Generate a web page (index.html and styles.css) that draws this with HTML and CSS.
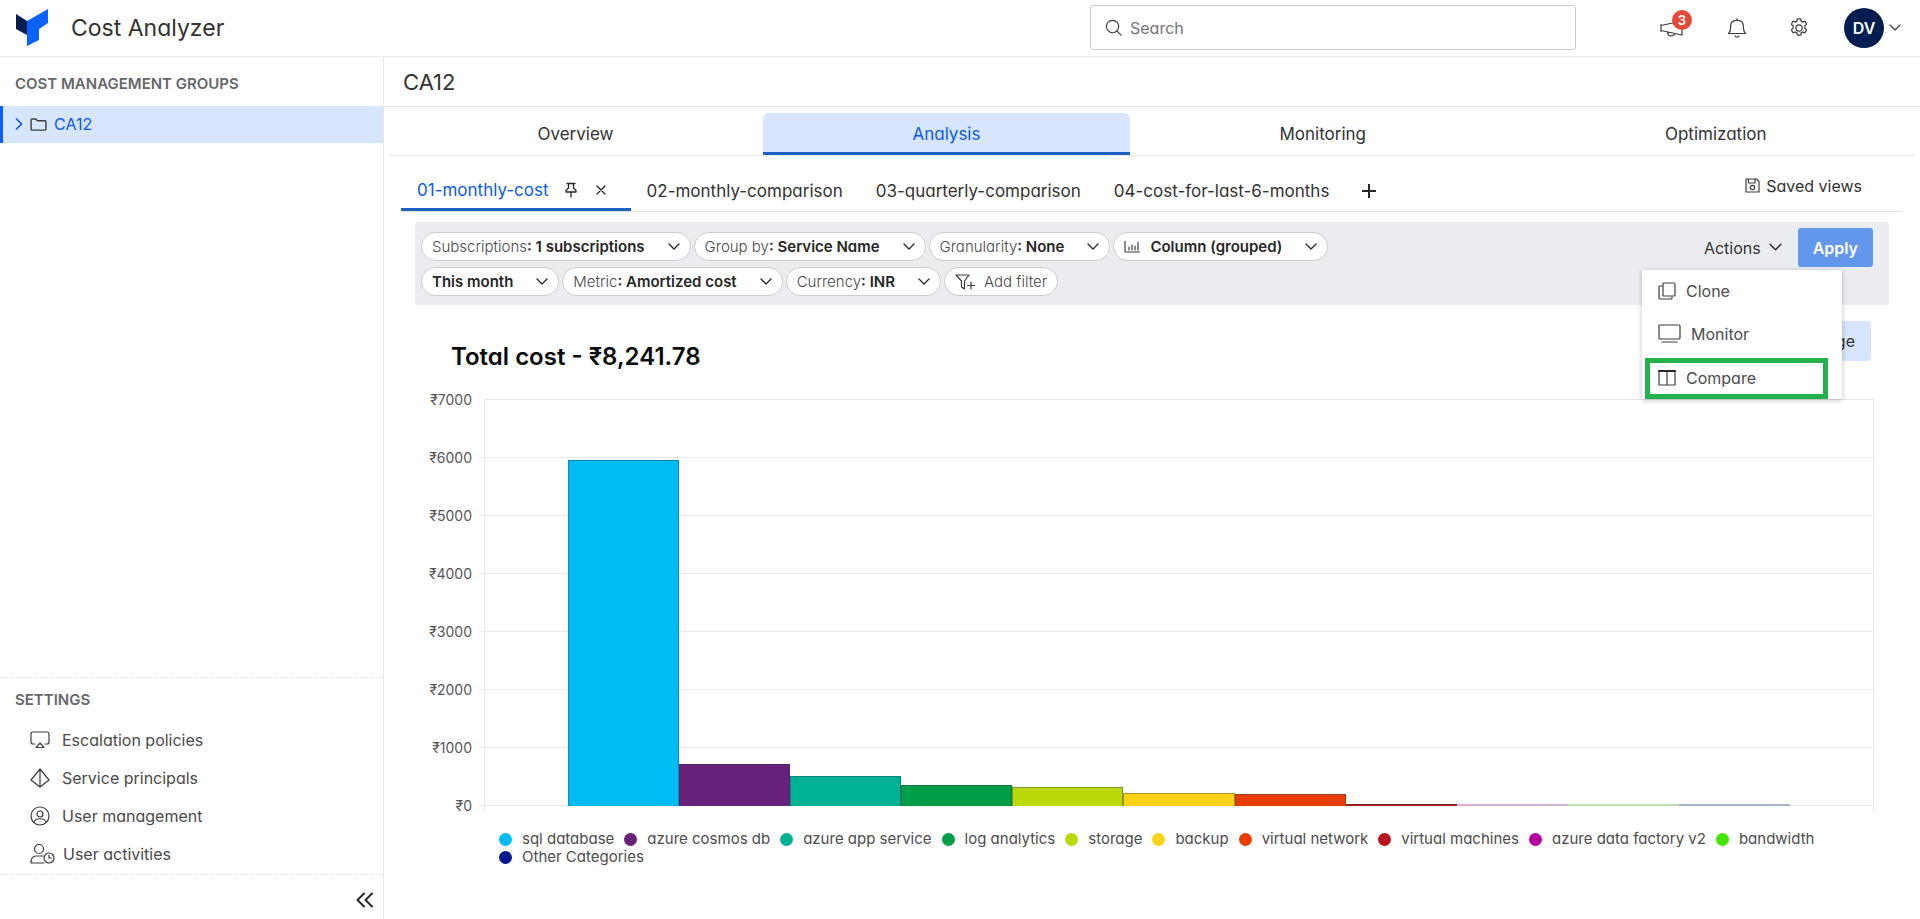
FILE: index.html
```html
<!DOCTYPE html>
<html lang="en">
<head>
<meta charset="utf-8">
<title>Cost Analyzer</title>
<link rel="stylesheet" href="styles.css">
</head>
<body>
<header class="topbar">
  <svg class="logo" viewBox="0 0 32 37" width="32" height="37"><path d="M0 5l11 7v14L0 20z" fill="#001d4f"/><path d="M11 12L32 0v14l-9 6v11l-12 6z" fill="#0a62fb"/></svg>
  <span class="brand">Cost Analyzer</span>
  <label class="search">
    <svg viewBox="0 0 18 18" width="17" height="17" class="ico"><circle cx="8" cy="8" r="6.5"/><path d="M12.500 12.500L17 17"/></svg>
    <input type="text" placeholder="Search" aria-label="Search">
  </label>
  <div class="tools">
    <button class="tool announce" aria-label="Announcements">
      <svg viewBox="0 0 26 22" width="26" height="22" class="ico"><path d="M23 4v14M23 4L2 8.500M2 7.500v7M2 13.500L23 18M8.500 15c0 5 6.500 5 7 1.500"/></svg>
      <span class="badge">3</span>
    </button>
    <button class="tool" aria-label="Notifications">
      <svg viewBox="0 0 20 20" width="20" height="20" class="ico"><path d="M10 .7v1.600M1.500 15.500h17c-1.500-1.500-2.200-3-2.200-8C16.300 4 13.500 2.300 10 2.300S3.700 4 3.700 7.500c0 5-.7 6.500-2.200 8zM8 18c.8 1.500 3.200 1.500 4 0"/></svg>
    </button>
    <button class="tool" aria-label="Settings">
      <svg viewBox="0 0 20 20" width="20" height="20" class="ico"><circle cx="10" cy="10" r="3.200"/><path d="M8 1.500q0-.7.700-.7h2.600q.7 0 .7.700v1.600q.9.400 1.700 1l1.500-.8q.6-.3 1 .3l1.200 2.200q.3.600-.2 1l-1.400.9q.2 1.300 0 2.600l1.400.9q.5.400.2 1l-1.200 2.200q-.4.600-1 .3l-1.500-.8q-.8.600-1.700 1v1.600q0 .7-.7.700H8.700q-.7 0-.7-.7v-1.600q-.9-.4-1.700-1l-1.500.8q-.6.300-1-.3l-1.200-2.200q-.3-.6.2-1l1.400-.9q-.2-1.300 0-2.600l-1.400-.9q-.5-.4-.2-1l1.200-2.200q.4-.6 1-.3l1.500.8q.8-.6 1.700-1z"/></svg>
    </button>
    <button class="account" aria-label="Account">
      <span class="avatar">DV</span>
      <svg viewBox="0 0 12 12" width="12" height="12" class="ico"><path d="M1 3l5 5 5-5"/></svg>
    </button>
  </div>
</header>

<div class="shell">
  <aside class="sidebar">
    <h2 class="side-title">COST MANAGEMENT GROUPS</h2>
    <a class="group" href="#">
      <svg viewBox="0 0 8 12" width="8" height="12" class="ico accent"><path d="M1.500 1l5 5-5 5"/></svg>
      <svg viewBox="0 0 18 14" width="17" height="13" class="ico folder"><path d="M1 12V2q0-1 1-1h4l2 2h8q1 0 1 1v8q0 1-1 1H2q-1 0-1-1z"/></svg>
      <span>CA12</span>
    </a>
    <nav class="settings">
      <h2 class="settings-title">SETTINGS</h2>
      <a href="#"><svg viewBox="0 0 20 20" width="20" height="20" class="ico"><path d="M5 14H3q-2 0-2-2V4q0-2 2-2h14q2 0 2 2v8q0 2-2 2h-2M10 13l4 4.500H6z"/></svg>Escalation policies</a>
      <a href="#"><svg viewBox="0 0 20 20" width="20" height="20" class="ico"><path d="M10 1l9 11-9 7-9-7zM10 1v18"/></svg>Service principals</a>
      <a href="#"><svg viewBox="0 0 20 20" width="20" height="20" class="ico"><circle cx="10" cy="10" r="9"/><circle cx="10" cy="8" r="3"/><path d="M4 16.500c1-5 11-5 12 0"/></svg>User management</a>
      <a href="#" class="wide"><svg viewBox="0 0 25 20" width="25" height="20" class="ico"><circle cx="9" cy="5" r="4.500"/><path d="M14 19H1c0-5 2-7 5-7h7"/><circle cx="19" cy="14" r="5"/><path d="M19 11v3h2.500"/></svg>User activities</a>
    </nav>
    <div class="collapse"><button aria-label="Collapse sidebar"><svg viewBox="0 0 18 16" width="18" height="16" class="ico bold"><path d="M8.500 1l-7 7 7 7M16.500 1l-7 7 7 7"/></svg></button></div>
  </aside>

  <main class="main">
    <h1 class="page-title">CA12</h1>
    <nav class="tabs">
      <a href="#">Overview</a>
      <a href="#" class="active">Analysis</a>
      <a href="#">Monitoring</a>
      <a href="#">Optimization</a>
    </nav>

    <div class="views">
      <div class="view active">
        <a href="#">01-monthly-cost</a>
        <button aria-label="Pin"><svg viewBox="0 0 12 16" width="12" height="16" class="ico dark"><path d="M2 1.500h8M3.500 1.500v4.500L1 8.500V10h10V8.500L8.500 6V1.500M6 10v5"/></svg></button>
        <button aria-label="Close"><svg viewBox="0 0 10 10" width="10" height="10" class="ico dark"><path d="M1 1l8 8M9 1L1 9"/></svg></button>
      </div>
      <a class="view" href="#">02-monthly-comparison</a>
      <a class="view" href="#">03-quarterly-comparison</a>
      <a class="view" href="#">04-cost-for-last-6-months</a>
      <button class="add" aria-label="Add view"><svg viewBox="0 0 14 14" width="14" height="14" class="ico bold"><path d="M7 0v14M0 7h14"/></svg></button>
      <a class="saved" href="#"><svg viewBox="0 0 15 15" width="15" height="15" class="ico"><path d="M1 1h10.500L14 3.500V14H1zM3.500 1v4h6.500V1"/><circle cx="7.500" cy="9.500" r="2.200"/></svg>Saved views</a>
    </div>

    <section class="filters">
      <div class="pills">
        <div class="pill-row">
          <button class="pill"><span>Subscriptions<b>: 1 subscriptions</b></span><svg viewBox="0 0 12 12" width="12" height="12" class="ico dark"><path d="M1 3l5 5 5-5"/></svg></button>
          <button class="pill"><span>Group by<b>: Service Name</b></span><svg viewBox="0 0 12 12" width="12" height="12" class="ico dark"><path d="M1 3l5 5 5-5"/></svg></button>
          <button class="pill"><span>Granularity<b>: None</b></span><svg viewBox="0 0 12 12" width="12" height="12" class="ico dark"><path d="M1 3l5 5 5-5"/></svg></button>
          <button class="pill"><span class="with-icon"><svg viewBox="0 0 16 12" width="16" height="12" class="ico"><path d="M1 0v11h15M5 9V6M8 9V4M11 9V5M14 9V1"/></svg><b>Column (grouped)</b></span><svg viewBox="0 0 12 12" width="12" height="12" class="ico dark"><path d="M1 3l5 5 5-5"/></svg></button>
        </div>
        <div class="pill-row">
          <button class="pill"><b>This month</b><svg viewBox="0 0 12 12" width="12" height="12" class="ico dark"><path d="M1 3l5 5 5-5"/></svg></button>
          <button class="pill"><span>Metric<b>: Amortized cost</b></span><svg viewBox="0 0 12 12" width="12" height="12" class="ico dark"><path d="M1 3l5 5 5-5"/></svg></button>
          <button class="pill"><span>Currency<b>: INR</b></span><svg viewBox="0 0 12 12" width="12" height="12" class="ico dark"><path d="M1 3l5 5 5-5"/></svg></button>
          <button class="pill add-filter"><svg viewBox="0 0 20 16" width="20" height="16" class="ico"><path d="M1 1h13L9.500 7v8L6.500 13V7zM16 8v7M12.500 11.500h7"/></svg>Add filter</button>
        </div>
      </div>
      <div class="actions">
        <button class="actions-btn" aria-expanded="true">Actions<svg viewBox="0 0 12 12" width="13" height="13" class="ico dark"><path d="M1 3l5 5 5-5"/></svg></button>
        <button class="apply">Apply</button>
        <div class="menu">
          <button><svg viewBox="0 0 18 18" width="18" height="18" class="ico"><rect x="5" y="1" width="12" height="13" rx="1"/><path d="M4 4H2q-1 0-1 1v11q0 1 1 1h11q1 0 1-1v-1"/></svg>Clone</button>
          <button><svg viewBox="0 0 23 19" width="23" height="19" class="ico"><rect x="1" y="1" width="21" height="14" rx="1"/><path d="M4 18h15"/></svg>Monitor</button>
          <button class="marked"><svg viewBox="0 0 18 18" width="18" height="18" class="ico"><path d="M1 2v14h16V2M9 2v14"/><path class="thick" d="M1 2h16"/></svg>Compare</button>
        </div>
      </div>
    </section>

    <section class="report">
      <div class="report-head">
        <h2>Total cost - ₹8,241.78</h2>
        <button class="usage">ge</button>
      </div>
      <div class="chart">
        <div class="axis"><span>₹7000</span><span>₹6000</span><span>₹5000</span><span>₹4000</span><span>₹3000</span><span>₹2000</span><span>₹1000</span><span>₹0</span></div>
        <div class="grid"><i></i><i></i><i></i><i></i><i></i><i></i><i></i></div>
        <div class="bars">
          <div class="bar c1" style="height:85%"></div>
          <div class="bar c2" style="height:10.400%"></div>
          <div class="bar c3" style="height:7.300%"></div>
          <div class="bar c4" style="height:5.200%"></div>
          <div class="bar c5" style="height:4.600%"></div>
          <div class="bar c6" style="height:3.300%"></div>
          <div class="bar c7" style="height:3%"></div>
          <div class="bar c8" style="height:0.600%"></div>
          <div class="bar thin t9"></div>
          <div class="bar thin t10"></div>
          <div class="bar thin t11"></div>
        </div>
      </div>
      <ul class="legend">
        <li><i class="c1"></i>sql database</li>
        <li><i class="c2"></i>azure cosmos db</li>
        <li><i class="c3"></i>azure app service</li>
        <li><i class="c4"></i>log analytics</li>
        <li><i class="c5"></i>storage</li>
        <li><i class="c6"></i>backup</li>
        <li><i class="c7"></i>virtual network</li>
        <li><i class="c8"></i>virtual machines</li>
        <li><i class="c9"></i>azure data factory v2</li>
        <li><i class="c10"></i>bandwidth</li>
        <li><i class="c11"></i>Other Categories</li>
      </ul>
    </section>
  </main>
</div>
</body>
</html>
```
FILE: styles.css
```css
* { box-sizing: border-box; }
body {
  margin: 0;
  min-height: 100vh;
  display: flex;
  flex-direction: column;
  font-family: Inter, "Noto Sans", sans-serif;
  font-feature-settings: "cv11";
  font-size: 16px;
  color: #323232;
  background: #fff;
}
button {
  font: inherit;
  font-feature-settings: inherit;
  color: inherit;
  background: none;
  border: 0;
  padding: 0;
  display: flex;
  align-items: center;
}
a { color: inherit; text-decoration: none; }
h1, h2 { margin: 0; font-weight: 400; }
svg { flex: none; display: block; }
.ico { fill: none; stroke: #3c3c3c; stroke-width: 1.2; stroke-linejoin: round; stroke-linecap: round; }
.ico.accent { stroke: #0a55e0; stroke-width: 1.6; }
.ico.dark { stroke: #262626; stroke-width: 1.3; }
.ico.bold { stroke: #262626; stroke-width: 2; stroke-linecap: butt; }
.ico .thick { stroke-width: 2; stroke: #262626; }

.topbar {
  display: flex;
  align-items: center;
  height: 57px;
  padding: 0 19px 1px 16px;
  border-bottom: 1px solid #e8e8e8;
}
.brand { margin-left: 23px; font-size: 23px; }
.search {
  display: flex;
  align-items: center;
  gap: 8px;
  width: 486px;
  height: 45px;
  margin-left: auto;
  padding: 0 14px;
  border: 1px solid #c9c9d6;
  border-radius: 3px;
}
.search input {
  flex: 1;
  min-width: 0;
  padding: 0;
  border: 0;
  outline: 0;
  font: inherit;
  font-feature-settings: inherit;
}
.search input::placeholder { color: #74757a; opacity: 1; }
.tools { display: flex; align-items: center; margin-left: 83px; gap: 42px; }
.tool { position: relative; }
.badge {
  position: absolute;
  left: 13px;
  top: -7px;
  width: 20px;
  height: 20px;
  border-radius: 50%;
  background: #e34a3b;
  color: #fff;
  font-size: 13px;
  line-height: 20px;
  font-weight: 600;
}
.account { gap: 5px; margin-left: -7px; }
.avatar {
  width: 40px;
  height: 40px;
  border-radius: 50%;
  background: #001d4f;
  color: #fff;
  font-weight: 600;
  line-height: 40px;
}

.shell { flex: 1; display: flex; }
.sidebar {
  width: 384px;
  flex: none;
  display: flex;
  flex-direction: column;
  border-right: 1px solid #e8e8e8;
}
.side-title, .settings-title { font-size: 15px; font-weight: 600; color: #66676b; }
.side-title { padding: 4px 15px 0; line-height: 45px; }
.group {
  display: flex;
  align-items: center;
  height: 37px;
  padding: 0 0 1px 12px;
  gap: 7px;
  border-left: 3px solid #0a62fb;
  background: #d8e5ff;
  color: #0a5ae6;
}
.group .folder { stroke-width: 1.5; }
.settings {
  margin-top: auto;
  padding: 10px 15px 0;
  border-top: 1px dashed #e4e4e4;
  height: 197px;
}
.settings-title { line-height: 24px; padding-bottom: 9px; }
.settings a { display: flex; align-items: center; gap: 12px; height: 38px; padding-left: 15px; color: #4a4a4a; }
.settings .wide { gap: 8px; }
.collapse { display: flex; justify-content: flex-end; height: 45px; padding: 5px 9px 0 0; border-top: 1px dashed #e4e4e4; }

.main { flex: 1; min-width: 0; display: flex; flex-direction: column; }
.page-title { height: 50px; line-height: 50px; padding-left: 19px; font-size: 22px; border-bottom: 1px solid #e8e8e8; }
.tabs { display: flex; margin: 0 4px; padding-top: 6px; border-bottom: 1px solid #e8e8e8; font-size: 17px; }
.tabs a { flex: 1 1 auto; height: 42px; line-height: 42px; text-align: center; }
.tabs .active {
  background: #d8e5ff;
  color: #0a5ae6;
  border-bottom: 3px solid #1c60c0;
  border-radius: 6px 6px 0 0;
}
.views {
  display: flex;
  align-items: center;
  height: 56px;
  margin: 0 18px 0 17px;
  border-bottom: 1px solid #dedede;
  font-size: 17px;
}
.view { height: 100%; display: flex; align-items: center; padding: 15px 17px 0 16px; }
.view.active { color: #0a5ae6; border-bottom: 3px solid #1c60c0; padding-right: 25px; }
.view.active button { margin-left: 16px; }
.view.active button + button { margin-left: 19px; }
.add { margin: 14px 0 0 16px; }
.saved { display: flex; align-items: center; gap: 6px; margin-left: auto; padding: 4px 40px 0 0; font-size: 16px; }

.filters {
  display: flex;
  justify-content: space-between;
  margin: 10px 31px 0;
  padding: 6px 16px 9px 6px;
  background: #ebecf0;
  border-radius: 3px;
  font-size: 16px;
}
.pills { padding-top: 4px; }
.pill-row { display: flex; gap: 3px; margin-bottom: 6px; }
.pill-row + .pill-row { margin-bottom: 0; }
.pill {
  height: 29px;
  padding: 0 10px;
  gap: 23px;
  border: 1px solid #c9cacc;
  border-radius: 15px;
  background: #fff;
  font-size: 15px;
  font-weight: 300;
  color: #48494c;
}
.pill b { font-weight: 600; color: #262626; }
.with-icon { display: flex; align-items: center; gap: 10px; }
.add-filter { gap: 9px; }
.actions { position: relative; display: flex; align-items: flex-start; gap: 16px; }
.actions-btn { height: 39px; gap: 8px; }
.apply { height: 39px; padding: 0 15px; border-radius: 3px; background: #6297ec; color: #fff; font-weight: 600; }
.menu {
  position: absolute;
  z-index: 2;
  top: 42px;
  right: 31px;
  width: 200px;
  background: #fff;
  box-shadow: 0 1px 5px rgba(0, 0, 0, .25);
}
.menu button { width: 100%; height: 43px; gap: 10px; padding: 0 0 2px 16px; color: #4c4c4c; }
.menu .marked { width: 183px; height: 41px; margin: 2px 0 0 3px; padding: 0 0 2px 8px; border: 5px solid #22b14c; }

.report { padding: 16px 46px 0 31px; }
.report-head { display: flex; justify-content: space-between; height: 78px; padding: 0 3px 0 36px; }
.report-head h2 { font-size: 24px; font-weight: 600; color: #0c0c0c; line-height: 72px; }
.usage { height: 40px; width: 110px; justify-content: flex-end; padding-right: 16px; border-radius: 3px; background: #d8e5ff; }
.chart { display: grid; grid-template: 412px / 65px 1fr; font-size: 14px; color: #55565a; }
.axis { grid-area: 1 / 1; margin-top: -8px; padding-right: 8px; text-align: right; }
.axis span { display: block; height: 58px; line-height: 18px; }
.axis span:last-child { height: 18px; }
.grid { grid-area: 1 / 2; display: flex; flex-direction: column; border: 1px solid #e6e6e6; border-bottom: 0; margin-left: 4px; }
.grid i { height: 58px; margin-left: -5px; border-bottom: 1px solid #e9e9e9; }
.bars { grid-area: 1 / 2; display: flex; align-items: flex-end; height: 407px; margin-left: 4px; padding: 0 6%; }
.bar { flex: 1; border: 1px solid rgba(40, 60, 80, .4); border-bottom: 0; }
.c1 { background: #00bcf2; } .c2 { background: #68217a; } .c3 { background: #00b294; }
.c4 { background: #009e49; } .c5 { background: #bad80a; } .c6 { background: #fcd116; }
.c7 { background: #e83c00; } .c8 { background: #ba141a; } .c9 { background: #b4009e; }
.c10 { background: #43e600; } .c11 { background: #00188f; }
.thin { height: 2px; border-color: transparent; border-top: 0; }
.t9 { background: #d8b0d0; } .t10 { background: #c0e0b0; } .t11 { background: #a8b0d0; }
.legend {
  display: flex;
  flex-wrap: wrap;
  list-style: none;
  margin: 19px 0 0;
  padding: 0 0 0 84px;
  column-gap: 10px;
  font-size: 15px;
  line-height: 18px;
  color: #4c4c4c;
}
.legend li { display: flex; align-items: center; gap: 10px; }
.legend i { width: 13px; height: 13px; border-radius: 50%; }
```
